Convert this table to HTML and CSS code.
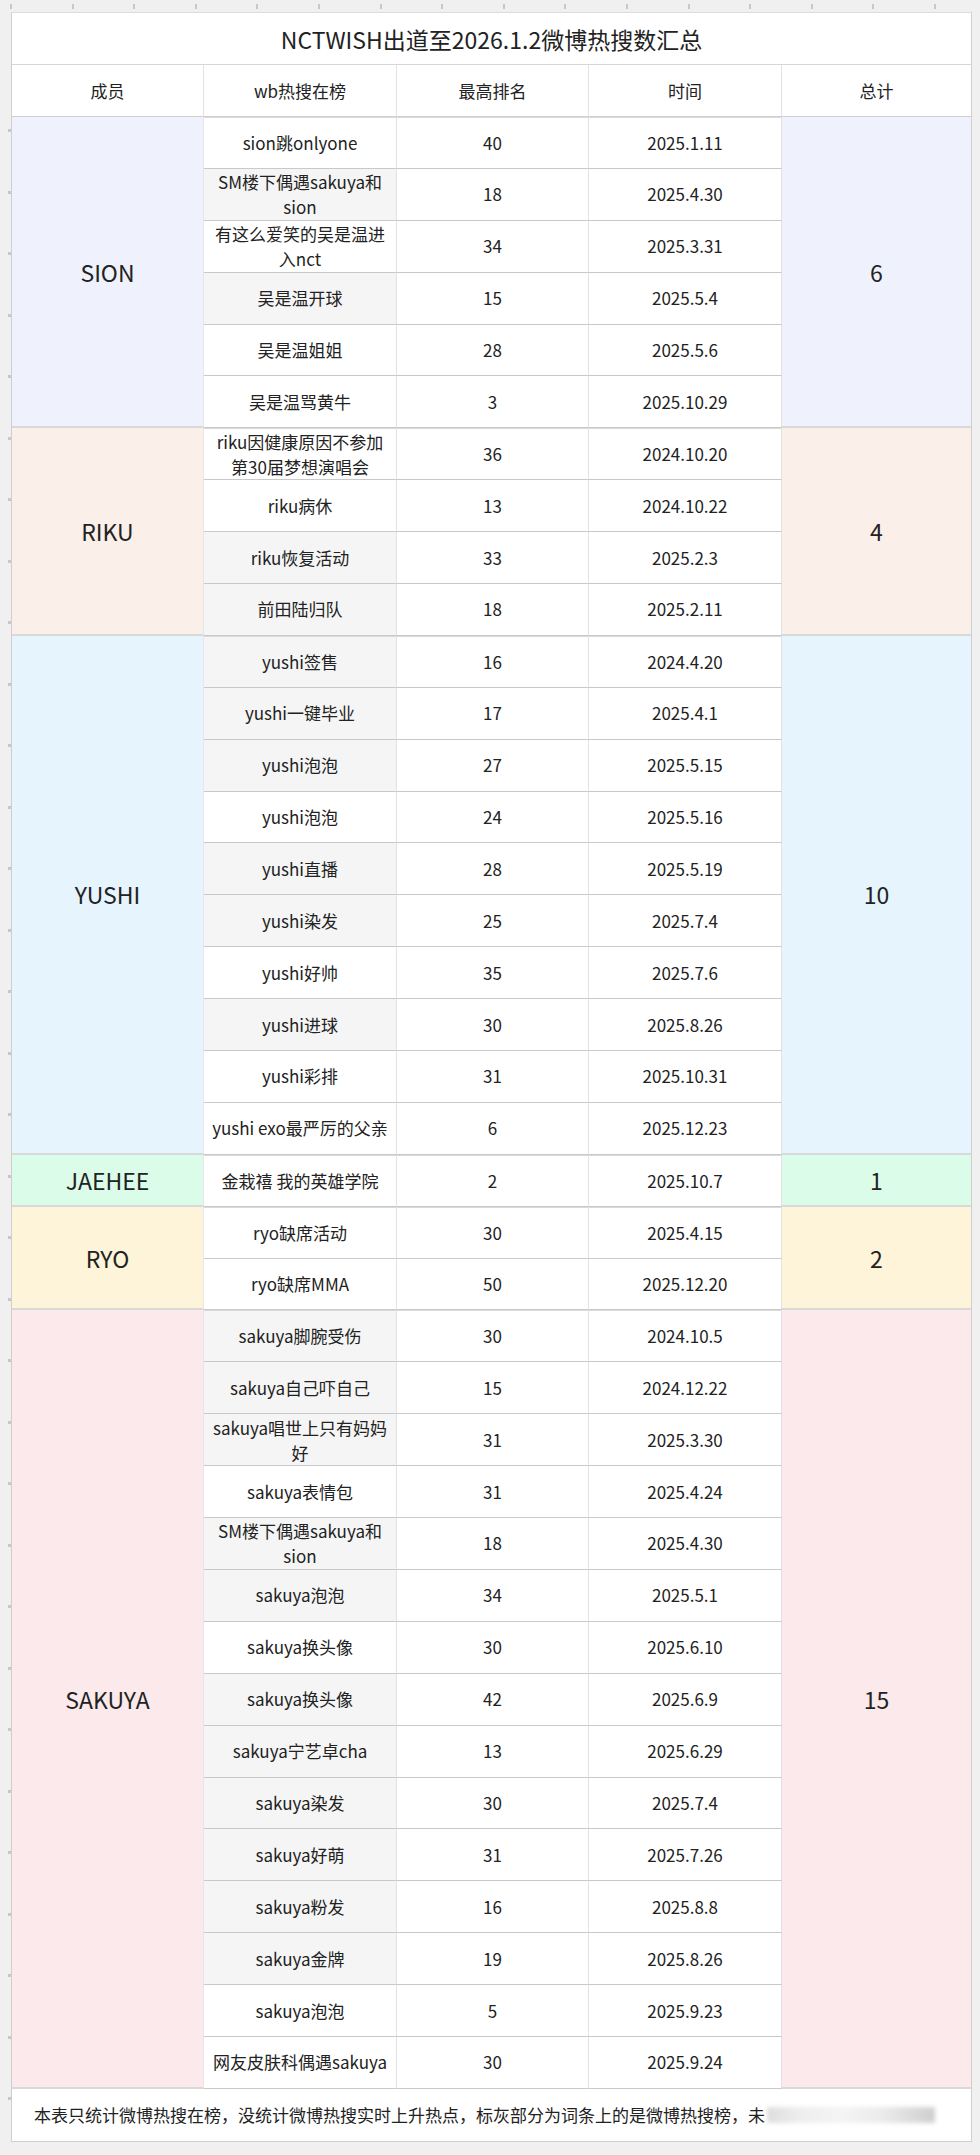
FILE: index.html
```html
<!DOCTYPE html>
<html lang="zh-CN">
<head>
<meta charset="utf-8">
<title>NCTWISH出道至2026.1.2微博热搜数汇总</title>
<link rel="stylesheet" href="styles.css">
</head>
<body>
<div class="page">
  <div class="sheet">
    <div class="title">NCTWISH出道至2026.1.2微博热搜数汇总</div>
    <div class="grid">
      <div class="c head member-h">成员</div>
      <div class="c head topic">wb热搜在榜</div>
      <div class="c head rank">最高排名</div>
      <div class="c head date">时间</div>
      <div class="c head total-h">总计</div>

      <!-- SION -->
      <div class="c member sion rows-6">SION</div>
      <div class="c topic first">sion跳onlyone</div><div class="c rank first">40</div><div class="c date first">2025.1.11</div>
      <div class="c total sion rows-6">6</div>
      <div class="c topic g two">SM楼下偶遇sakuya和<br>sion</div><div class="c rank">18</div><div class="c date">2025.4.30</div>
      <div class="c topic two">有这么爱笑的吴是温进<br>入nct</div><div class="c rank">34</div><div class="c date">2025.3.31</div>
      <div class="c topic g">吴是温开球</div><div class="c rank">15</div><div class="c date">2025.5.4</div>
      <div class="c topic">吴是温姐姐</div><div class="c rank">28</div><div class="c date">2025.5.6</div>
      <div class="c topic">吴是温骂黄牛</div><div class="c rank">3</div><div class="c date">2025.10.29</div>

      <!-- RIKU -->
      <div class="c member riku rows-4">RIKU</div>
      <div class="c topic two first">riku因健康原因不参加<br>第30届梦想演唱会</div><div class="c rank first">36</div><div class="c date first">2024.10.20</div>
      <div class="c total riku rows-4">4</div>
      <div class="c topic">riku病休</div><div class="c rank">13</div><div class="c date">2024.10.22</div>
      <div class="c topic g">riku恢复活动</div><div class="c rank">33</div><div class="c date">2025.2.3</div>
      <div class="c topic g">前田陆归队</div><div class="c rank">18</div><div class="c date">2025.2.11</div>

      <!-- YUSHI -->
      <div class="c member yushi rows-10">YUSHI</div>
      <div class="c topic g first">yushi签售</div><div class="c rank first">16</div><div class="c date first">2024.4.20</div>
      <div class="c total yushi rows-10">10</div>
      <div class="c topic g">yushi一键毕业</div><div class="c rank">17</div><div class="c date">2025.4.1</div>
      <div class="c topic g">yushi泡泡</div><div class="c rank">27</div><div class="c date">2025.5.15</div>
      <div class="c topic">yushi泡泡</div><div class="c rank">24</div><div class="c date">2025.5.16</div>
      <div class="c topic g">yushi直播</div><div class="c rank">28</div><div class="c date">2025.5.19</div>
      <div class="c topic g">yushi染发</div><div class="c rank">25</div><div class="c date">2025.7.4</div>
      <div class="c topic">yushi好帅</div><div class="c rank">35</div><div class="c date">2025.7.6</div>
      <div class="c topic g">yushi进球</div><div class="c rank">30</div><div class="c date">2025.8.26</div>
      <div class="c topic">yushi彩排</div><div class="c rank">31</div><div class="c date">2025.10.31</div>
      <div class="c topic">yushi exo最严厉的父亲</div><div class="c rank">6</div><div class="c date">2025.12.23</div>

      <!-- JAEHEE -->
      <div class="c member jaehee rows-1">JAEHEE</div>
      <div class="c topic first">金栽禧 我的英雄学院</div><div class="c rank first">2</div><div class="c date first">2025.10.7</div>
      <div class="c total jaehee rows-1">1</div>

      <!-- RYO -->
      <div class="c member ryo rows-2">RYO</div>
      <div class="c topic first">ryo缺席活动</div><div class="c rank first">30</div><div class="c date first">2025.4.15</div>
      <div class="c total ryo rows-2">2</div>
      <div class="c topic">ryo缺席MMA</div><div class="c rank">50</div><div class="c date">2025.12.20</div>

      <!-- SAKUYA -->
      <div class="c member sakuya rows-15">SAKUYA</div>
      <div class="c topic g first">sakuya脚腕受伤</div><div class="c rank first">30</div><div class="c date first">2024.10.5</div>
      <div class="c total sakuya rows-15">15</div>
      <div class="c topic g">sakuya自己吓自己</div><div class="c rank">15</div><div class="c date">2024.12.22</div>
      <div class="c topic g two">sakuya唱世上只有妈妈<br>好</div><div class="c rank">31</div><div class="c date">2025.3.30</div>
      <div class="c topic">sakuya表情包</div><div class="c rank">31</div><div class="c date">2025.4.24</div>
      <div class="c topic g two">SM楼下偶遇sakuya和<br>sion</div><div class="c rank">18</div><div class="c date">2025.4.30</div>
      <div class="c topic g">sakuya泡泡</div><div class="c rank">34</div><div class="c date">2025.5.1</div>
      <div class="c topic">sakuya换头像</div><div class="c rank">30</div><div class="c date">2025.6.10</div>
      <div class="c topic g">sakuya换头像</div><div class="c rank">42</div><div class="c date">2025.6.9</div>
      <div class="c topic g">sakuya宁艺卓cha</div><div class="c rank">13</div><div class="c date">2025.6.29</div>
      <div class="c topic g">sakuya染发</div><div class="c rank">30</div><div class="c date">2025.7.4</div>
      <div class="c topic g">sakuya好萌</div><div class="c rank">31</div><div class="c date">2025.7.26</div>
      <div class="c topic g">sakuya粉发</div><div class="c rank">16</div><div class="c date">2025.8.8</div>
      <div class="c topic g">sakuya金牌</div><div class="c rank">19</div><div class="c date">2025.8.26</div>
      <div class="c topic">sakuya泡泡</div><div class="c rank">5</div><div class="c date">2025.9.23</div>
      <div class="c topic">网友皮肤科偶遇sakuya</div><div class="c rank">30</div><div class="c date">2025.9.24</div>
    </div>
    <div class="note">本表只统计微博热搜在榜，没统计微博热搜实时上升热点，标灰部分为词条上的是微博热搜榜，未<span class="blur"></span></div>
  </div>
</div>
</body>
</html>
```
FILE: styles.css
```css
html, body {
  margin: 0;
  padding: 0;
}
body {
  width: 980px;
  min-height: 2155px;
  background-color: #f0f0f0;
  background-image:
    repeating-linear-gradient(90deg, #c8c8c8 0 2px, transparent 2px 61.6px),
    repeating-linear-gradient(180deg, #c8c8c8 0 3px, transparent 3px 61.5px);
  background-size: 970px 5px, 3px 2000px;
  background-position: 10px 4px, 8px 129px;
  background-repeat: no-repeat;
  font-family: "Noto Sans CJK SC", "Noto Sans", sans-serif;
  color: #222;
}
.page {
  padding: 12px 8px 15px 11px;
}
.sheet {
  width: 961px;
  background: #fff;
  border: 1px solid #cfcfcf;
  border-top-color: #dcdcdc;
  box-sizing: border-box;
}
.title {
  height: 52px;
  display: flex;
  align-items: center;
  justify-content: center;
  font-size: 23px;
  border-bottom: 1px solid #d6d6d6;
  box-sizing: border-box;
}
.grid {
  display: grid;
  grid-template-columns: 192px 193px 192px 193px 189px;
  grid-template-rows: 52px;
  grid-auto-rows: 51.9px;
}
.c {
  box-sizing: border-box;
  display: flex;
  align-items: center;
  justify-content: center;
  text-align: center;
  font-size: 17px;
  line-height: 26px;
  border-right: 1px solid #e2e2e2;
  border-bottom: 1px solid #c9c9c9;
  white-space: nowrap;
  background: #fff;
}
.head {
  border-bottom: 1px solid #cfcfcf;
}
.member-h, .member { grid-column: 1; }
.topic { grid-column: 2; }
.rank { grid-column: 3; }
.date { grid-column: 4; }
.total-h, .total { grid-column: 5; border-right: none; }
.member, .total {
  font-size: 23px;
  border-bottom: 2px solid #d9d9d9;
}
.member { border-right-color: #e6e6ec; }
.first { border-top: 1px solid #dadada; }
.topic.g { background: #f5f5f5; }
.two { line-height: 25px; }
.rows-1 { grid-row: span 1; }
.rows-2 { grid-row: span 2; }
.rows-4 { grid-row: span 4; }
.rows-6 { grid-row: span 6; }
.rows-10 { grid-row: span 10; }
.rows-15 { grid-row: span 15; }
.sion { background: #eff2fc; }
.riku { background: #fbefe9; }
.yushi { background: #e5f4fd; }
.jaehee { background: #dcfcea; }
.ryo { background: #fdf4d9; }
.sakuya { background: #fbe9eb; }
.note {
  height: 52px;
  display: flex;
  align-items: center;
  padding-left: 22px;
  font-size: 17px;
  white-space: nowrap;
  box-sizing: border-box;
}
.blur {
  display: inline-block;
  width: 168px;
  height: 16px;
  margin-left: 2px;
  background: linear-gradient(90deg, #dedede 0%, #eeeeee 20%, #f4f4f4 45%, #eaeaea 70%, #cfcfcf 100%);
  filter: blur(2px);
}
```
